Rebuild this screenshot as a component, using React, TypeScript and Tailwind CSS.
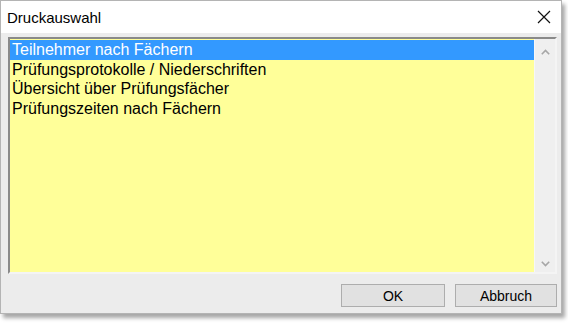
const items = ['Teilnehmer nach Fächern', 'Prüfungsprotokolle / Niederschriften', 'Übersicht über Prüfungsfächer', 'Prüfungszeiten nach Fächern']

function Chevron({ up }: { up?: boolean }) {
    return (
        <svg width="9" height="6" viewBox="0 0 9 6" className="block">
            <path d={up ? 'M0.8 5.2 L4.5 1.5 L8.2 5.2' : 'M0.8 0.8 L4.5 4.5 L8.2 0.8'} fill="none" stroke="#a6a6a6" strokeWidth="1.6" />
        </svg>
    )
}

export default function App() {
    return (
        <div className="h-[323px] w-[568px] overflow-hidden bg-white font-['Liberation_Sans',Arial,sans-serif] text-black">
            <div className="flex h-[314px] w-[562px] flex-col border border-[#b4b4b4] bg-[#ececec] shadow-[3px_4px_4px_rgba(0,0,0,0.35)]">
                {/* title bar */}
                <div className="flex h-[32px] shrink-0 items-center justify-between bg-white pl-[6px] pr-[10px]">
                    <span className="text-[15px] leading-none">Druckauswahl</span>
                    <svg width="14" height="14" viewBox="0 0 14 14" className="block">
                        <path d="M1 1 L13 13 M13 1 L1 13" stroke="#111" strokeWidth="1.2" />
                    </svg>
                </div>
                <div className="flex flex-1 flex-col pl-[7px] pr-[4px] pt-[4px]">
                    {/* list box */}
                    <div className="flex h-[237px] border-2 border-b-[#f4f4f4] border-l-[#8a8a8a] border-r-[#f4f4f4] border-t-[#8a8a8a] bg-[#ffff99]">
                        <div className="flex-1 pt-[1px] text-[16px] leading-[19.7px]">
                            {items.map((it, i) => (
                                <div key={it} className={i === 0 ? 'h-[19.7px] whitespace-nowrap bg-[#3399ff] pl-[2px] text-white' : 'h-[19.7px] whitespace-nowrap pl-[2px]'}>
                                    {it}
                                </div>
                            ))}
                        </div>
                        <div className="flex w-[21px] flex-col items-center justify-between border-l border-[#f7f7f7] bg-[#efefef] pb-[5px] pt-[10px]">
                            <Chevron up />
                            <Chevron />
                        </div>
                    </div>
                    {/* buttons */}
                    <div className="mt-[10px] flex justify-end gap-[10px]">
                        <button className="h-[23px] w-[104px] border border-[#adadad] bg-[#e1e1e1] text-[14px] leading-none">OK</button>
                        <button className="h-[23px] w-[102px] border border-[#adadad] bg-[#e1e1e1] text-[14px] leading-none">Abbruch</button>
                    </div>
                </div>
            </div>
        </div>
    )
}
